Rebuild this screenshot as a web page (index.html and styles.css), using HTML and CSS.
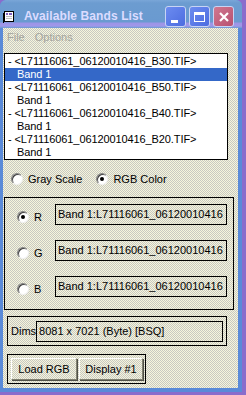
FILE: index.html
```html
<!doctype html>
<html>
<head>
    <meta charset="utf-8">
	<link rel="stylesheet" href="styles.css">
</head>
<body>
    <div class="window">
	    <div class="titlebar">
		    <svg class="appicon" width="12" height="13" viewBox="0 0 12 13">
			    <rect x="1.5" y="1.5" width="9" height="10" fill="#fff" stroke="#000"/>
				<rect x="3" y="3" width="2" height="2" fill="#8060c0"/>
				<rect x="6" y="3" width="3" height="2" fill="#8060c0"/>
				<rect x="3" y="6" width="6" height="1" fill="#c0c0c0"/>
				<rect x="3" y="8" width="6" height="1" fill="#c0c0c0"/>
				<rect x="0" y="3" width="1" height="10" fill="#000"/>
			</svg>
		    <span class="title">Available Bands List</span>
			<div class="tbtns">
			    <span class="tbtn tmin"><i></i></span>
			    <span class="tbtn tmax"><i></i></span>
			    <span class="tbtn tclose">
				    <svg width="12" height="12" viewBox="0 0 12 12"><path d="M2 2 L10 10 M10 2 L2 10" stroke="#fff" stroke-width="2.2"/></svg>
				</span>
			</div>
		</div>
		<div class="body">
		    <div class="menu">
			    <span>File</span>
				<span>Options</span>
			</div>
			<ul class="list">
			    <li>- &lt;L71116061_06120010416_B30.TIF&gt;</li>
				<li class="sub sel">Band 1</li>
			    <li>- &lt;L71116061_06120010416_B50.TIF&gt;</li>
				<li class="sub">Band 1</li>
			    <li>- &lt;L71116061_06120010416_B40.TIF&gt;</li>
				<li class="sub">Band 1</li>
			    <li>- &lt;L71116061_06120010416_B20.TIF&gt;</li>
				<li class="sub">Band 1</li>
			</ul>
			<div class="mode">
			    <label class="opt"><span class="radio"></span>Gray Scale</label>
			    <label class="opt"><span class="radio on"></span>RGB Color</label>
			</div>
			<div class="group rgb">
			    <div class="chan">
				    <label class="opt"><span class="radio on"></span>R</label>
					<div class="field">Band 1:L71116061_06120010416</div>
				</div>
			    <div class="chan">
				    <label class="opt"><span class="radio"></span>G</label>
					<div class="field">Band 1:L71116061_06120010416</div>
				</div>
			    <div class="chan">
				    <label class="opt"><span class="radio"></span>B</label>
					<div class="field">Band 1:L71116061_06120010416</div>
				</div>
			</div>
			<div class="group dims">
			    <span class="lbl">Dims</span>
				<div class="field">8081 x 7021 (Byte) [BSQ]</div>
			</div>
			<div class="group btns">
			    <button class="btn">Load RGB</button>
			    <button class="btn">Display #1</button>
			</div>
		</div>
	</div>
</body>
</html>
```

FILE: styles.css
```css
    *{
	    margin: 0;
		padding: 0;
		list-style: none;
		box-sizing: border-box;
	}
	body{
	    background-color: #8a6ccc;
		font-family: "Liberation Sans", Arial, sans-serif;
		font-size: 11px;
		color: #000;
	}
	.window{
	    width: 242px;
		height: 392px;
		background-color: #5a8ad8;
		border-radius: 6px 6px 0 0;
		display: flex;
		flex-direction: column;
	}
	.titlebar{
	    height: 28px;
		display: flex;
		align-items: center;
		padding: 0 4px 0 3px;
		background: linear-gradient(#7aa6d8 0, #6c9cd0 3px, #6a9ad0 22px, #9c94e6 23px, #a098ea 26px, #6a9ad0 28px);
		border-radius: 6px 6px 0 0;
	}
	.appicon{
	    margin-top: 4px;
	}
	.title{
	    margin-left: 9px;
		margin-top: 3px;
		font-weight: bold;
		font-size: 12px;
		color: #dcdcff;
		letter-spacing: 0.1px;
	}
	.tbtns{
	    margin-left: auto;
		display: flex;
		gap: 3px;
		margin-top: 5px;
		margin-right: 4px;
	}
	.tbtn{
	    width: 21px;
		height: 21px;
		border: 1px solid #c8d4f4;
		border-radius: 3px;
		background: linear-gradient(135deg, #6c8cf0, #4c6ce0);
		display: flex;
		align-items: center;
		justify-content: center;
	}
	.tmin i{
	    width: 7px;
		height: 3px;
		background: #fff;
		margin-top: 9px;
		margin-right: 3px;
	}
	.tmax i{
	    width: 11px;
		height: 10px;
		border: 1px solid #fff;
		border-top-width: 3px;
	}
	.tclose{
	    background: linear-gradient(135deg, #d07890, #b85070);
	}
	.body{
	    flex: 1;
		margin: 0 4px 4px 3px;
		background-color: #e4e4d2;
		background-image: repeating-conic-gradient(#c8c8c2 0 25%, #f6f6dc 0 50%);
		background-size: 2px 2px;
		display: flex;
		flex-direction: column;
	}
	.menu{
	    height: 18px;
		display: flex;
		align-items: center;
		gap: 10px;
		padding-left: 4px;
		color: #a4a49c;
	}
	.list{
	    margin: 7px 0 0 1px;
		width: 224px;
		height: 107px;
		border: 1px solid #000;
		background: #fff;
		padding-top: 1px;
	}
	.list li{
	    height: 13px;
		line-height: 13px;
		padding-left: 3px;
		white-space: nowrap;
		letter-spacing: -0.1px;
	}
	.list li.sub{
	    padding-left: 12px;
	}
	.list li.sel{
	    background: #3468c8;
		color: #fff;
	}
	.mode{
	    height: 37px;
		display: flex;
		align-items: center;
		padding-left: 8px;
		gap: 14px;
	}
	.opt{
	    display: flex;
		align-items: center;
		gap: 5px;
	}
	.radio{
	    width: 12px;
		height: 12px;
		border-radius: 50%;
		background: #fff;
		border: 1px solid #808080;
		border-right-color: #f0f0f0;
		border-bottom-color: #f0f0f0;
		box-shadow: inset 1px 1px 0 #404040;
		display: flex;
		align-items: center;
		justify-content: center;
	}
	.radio.on::after{
	    content: "";
		width: 4px;
		height: 4px;
		border-radius: 50%;
		background: #000;
	}
	.group{
	    border: 1px solid #000;
	}
	.rgb{
	    margin-left: 1px;
		width: 230px;
		height: 113px;
		padding: 6px 0 0 12px;
		display: flex;
		flex-direction: column;
		gap: 15px;
	}
	.chan{
	    display: flex;
		align-items: center;
	}
	.chan .opt{
	    width: 38px;
		margin-top: 4px;
	}
	.field{
	    border: 1px solid #000;
		height: 21px;
		line-height: 19px;
		padding-left: 2px;
		white-space: nowrap;
		overflow: hidden;
	}
	.chan .field{
	    width: 172px;
	}
	.dims{
	    margin: 6px 0 0 4px;
		width: 220px;
		height: 30px;
		display: flex;
		align-items: center;
		padding-left: 3px;
	}
	.dims .field{
	    width: 187px;
		margin-top: 1px;
	}
	.btns{
	    margin: 8px 0 0 4px;
		width: 139px;
		height: 30px;
		display: flex;
		align-items: center;
		padding-left: 3px;
		gap: 2px;
	}
	.btn{
	    font: inherit;
		font-size: 11px;
		height: 22px;
		padding: 0;
		white-space: nowrap;
		color: #000;
		background: transparent;
		border: 1px solid #fff;
		border-right-color: #808070;
		border-bottom-color: #808070;
		box-shadow: 1px 1px 0 #505048;
	}
	.btn:first-child{
	    width: 66px;
	}
	.btn:last-child{
	    width: 64px;
	}
```
